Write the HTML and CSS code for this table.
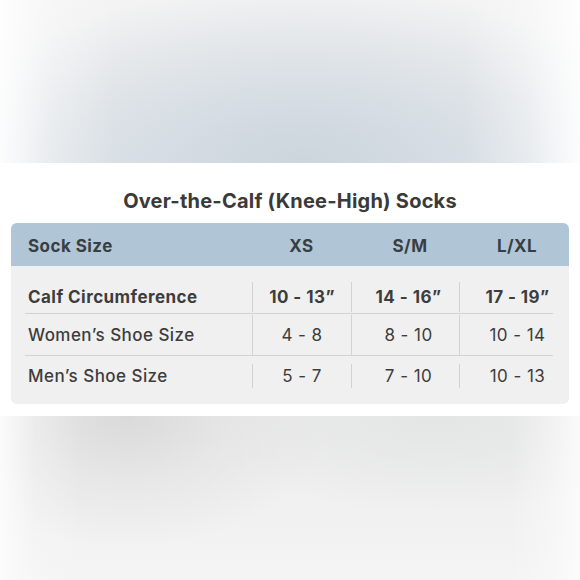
FILE: index.html
```html
<!DOCTYPE html>
<html lang="en">
<head>
<meta charset="utf-8">
<title>Over-the-Calf (Knee-High) Socks</title>
<link rel="stylesheet" href="styles.css">
</head>
<body>
<div class="page">
  <div class="blur blur-top"></div>
  <section class="card">
    <h1 class="title">Over-the-Calf (Knee-High) Socks</h1>
    <div class="chart">
      <div class="chart-head">
        <div class="cell label">Sock Size</div>
        <div class="cell c1">XS</div>
        <div class="cell c2">S/M</div>
        <div class="cell c3">L/XL</div>
      </div>
      <div class="chart-body">
        <div class="row r1 strong">
          <div class="cell label">Calf Circumference</div>
          <div class="cell c1">10 - 13”</div>
          <div class="cell c2">14 - 16”</div>
          <div class="cell c3">17 - 19”</div>
        </div>
        <div class="row r2">
          <div class="cell label">Women’s Shoe Size</div>
          <div class="cell c1">4 - 8</div>
          <div class="cell c2">8 - 10</div>
          <div class="cell c3">10 - 14</div>
        </div>
        <div class="row r3">
          <div class="cell label">Men’s Shoe Size</div>
          <div class="cell c1">5 - 7</div>
          <div class="cell c2">7 - 10</div>
          <div class="cell c3">10 - 13</div>
        </div>
      </div>
    </div>
  </section>
  <div class="blur blur-bottom"></div>
</div>
</body>
</html>
```

FILE: styles.css
```css
* { box-sizing: border-box; }
html, body { margin: 0; padding: 0; }
body {
  width: 580px;
  height: 580px;
  overflow: hidden;
  background: #ffffff;
  font-family: Inter, "Open Sans", "DejaVu Sans", sans-serif;
  color: #3d3d3d;
}
.page { display: flex; flex-direction: column; width: 580px; height: 580px; }

.blur-top {
  height: 163px;
  flex: none;
  background:
    radial-gradient(ellipse 62% 110% at 52% 100%, rgba(204,213,221,1) 0%, rgba(210,218,225,0.8) 40%, rgba(238,240,242,0) 100%),
    linear-gradient(to bottom, #f3f3f3 0%, #eeeff0 45%, #e4e8ec 100%);
  position: relative;
}
.blur-top::after {
  content: "";
  position: absolute;
  inset: 0;
  background:
    linear-gradient(to right, rgba(255,255,255,0.9) 0%, rgba(255,255,255,0.3) 9%, rgba(255,255,255,0) 20%, rgba(255,255,255,0) 80%, rgba(255,255,255,0.35) 91%, rgba(255,255,255,0.9) 100%);
}

.card {
  height: 253px;
  flex: none;
  background: #ffffff;
  padding: 26px 11px 0;
}
.title {
  margin: 0 0 10px;
  height: 24px;
  line-height: 24px;
  text-align: center;
  font-size: 20px;
  font-weight: 700;
  letter-spacing: 0.22px;
  color: #3a3a3a;
}
.chart {
  background: #f0f0f0;
  border-radius: 6px;
  overflow: hidden;
  height: 181px;
}
.chart-head {
  display: flex;
  align-items: center;
  height: 43px;
  background: #b0c6d6;
  padding: 2px 16px 0 14px;
  font-weight: 700;
  font-size: 17px;
  letter-spacing: 0.45px;
  color: #393e43;
}
.chart-body {
  padding: 16px 16px 0 14px;
}
.row {
  display: flex;
  align-items: center;
  font-size: 17px;
  letter-spacing: 0.45px;
  color: #3d3d3d;
}
.row + .row { border-top: 1.5px solid #d2d2d2; }
.row.strong { font-weight: 700; }
.r1 { height: 31px; padding-bottom: 1px; }
.r2 { height: 42px; padding-top: 1px; }
.r3 { height: 33px; padding-top: 8px; }

.cell { white-space: nowrap; }
.label { width: 227px; padding-left: 3px; }
.chart-head .label { font-weight: 700; }
.row .label { font-weight: 500; }
.row.strong .label { font-weight: 700; }
.c1, .c2, .c3 { text-align: center; align-self: stretch; display: flex; align-items: center; justify-content: center; }
.row .c1, .row .c2, .row .c3 { border-left: 1.5px solid #d2d2d2; }
.c1 { width: 99px; }
.c2 { width: 108px; padding-left: 6px; }
.c3 { width: 94px; padding-left: 22px; }
.chart-head .c2 { padding-left: 10px; }

.blur-bottom {
  flex: 1;
  position: relative;
  background:
    radial-gradient(ellipse 35% 80% at 22% 0%, rgba(218,218,218,1) 0%, rgba(226,226,226,0.6) 50%, rgba(240,240,240,0) 100%),
    radial-gradient(ellipse 40% 60% at 75% 0%, rgba(228,229,229,1) 0%, rgba(236,236,236,0) 100%),
    linear-gradient(to bottom, #ebebeb 0%, #f0f0f0 45%, #f4f4f4 100%);
}
.blur-bottom::after {
  content: "";
  position: absolute;
  inset: 0;
  background: linear-gradient(to right, rgba(252,252,252,0.95) 0%, rgba(250,250,250,0.3) 6%, rgba(255,255,255,0) 14%, rgba(255,255,255,0) 88%, rgba(250,250,250,0.5) 95%, rgba(252,252,252,0.9) 100%);
}
```
